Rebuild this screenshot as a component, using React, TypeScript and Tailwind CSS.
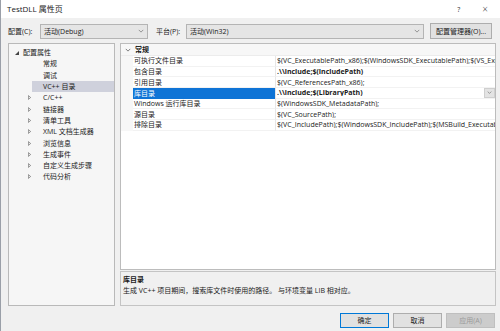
const treeItems = [
  { label: '常规', leaf: true },
  { label: '调试', leaf: true },
  { label: 'VC++ 目录', leaf: true, selected: true },
  { label: 'C/C++' },
  { label: '链接器' },
  { label: '清单工具' },
  { label: 'XML 文档生成器' },
  { label: '浏览信息' },
  { label: '生成事件' },
  { label: '自定义生成步骤' },
  { label: '代码分析' }
]

const props = [
  { name: '可执行文件目录', value: '$(VC_ExecutablePath_x86);$(WindowsSDK_ExecutablePath);$(VS_ExecutablePath);$(MSBuild_ExecutablePath)' },
  { name: '包含目录', value: '.\\\\include;$(IncludePath)', bold: true },
  { name: '引用目录', value: '$(VC_ReferencesPath_x86);' },
  { name: '库目录', value: '.\\\\include;$(LibraryPath)', bold: true, selected: true },
  { name: 'Windows 运行库目录', value: '$(WindowsSDK_MetadataPath);' },
  { name: '源目录', value: '$(VC_SourcePath);' },
  { name: '排除目录', value: '$(VC_IncludePath);$(WindowsSDK_IncludePath);$(MSBuild_ExecutablePath);$(VC_LibraryPath_x86);' }
]

function Chevron({ className }: { className?: string }) {
  return (
    <svg viewBox="0 0 8 5" className={className} fill="none" stroke="currentColor" strokeWidth="1">
      <polyline points="1,1 4,4 7,1" />
    </svg>
  )
}

function Dropdown({ label, width }: { label: string; width: string }) {
  return (
    <div className={`${width} shrink-0 h-[15px] flex items-center justify-between bg-[#e5e5e5] border border-[#b4b4b4] pl-[3px] pr-[3px]`}>
      <span>{label}</span>
      <Chevron className="w-[6px] h-[4px] text-[#7a7a7a]" />
    </div>
  )
}

function Tree() {
  return (
    <div className="w-[107px] shrink-0 border border-[#b9b9b9] bg-[#f6f6f6] pt-[3px] whitespace-nowrap">
      <div className="h-[11.3px] flex items-center pl-[6px] gap-[4px]">
        <svg viewBox="0 0 4 4" className="w-[4px] h-[4px] text-[#444]">
          <polygon points="4,0 4,4 0,4" fill="currentColor" />
        </svg>
        <span>配置属性</span>
      </div>
      {treeItems.map((item) => (
        <div
          key={item.label}
          className={`h-[11.3px] flex items-center ${item.selected ? 'bg-[#cfd1dc] ml-[23px] pl-[2px]' : 'pl-[19px]'}`}
        >
          {!item.leaf && (
            <svg viewBox="0 0 4 6" className="w-[3px] h-[5px] mr-[12px] text-[#555]">
              <polygon points="0.5,0.5 3.5,3 0.5,5.5" fill="none" stroke="currentColor" strokeWidth="0.8" />
            </svg>
          )}
          <span className={item.leaf && !item.selected ? 'pl-[15px]' : item.selected ? 'pl-[9px]' : ''}>{item.label}</span>
        </div>
      ))}
    </div>
  )
}

function Grid() {
  return (
    <div className="flex-1 border border-[#bcbcbc] bg-white overflow-hidden">
      <div className="h-[12px] flex items-center bg-[#f7f7f7] border-b border-[#ececec]">
        <Chevron className="w-[6px] h-[4px] ml-[4px] mr-[4px] text-[#555]" />
        <span className="font-bold">常规</span>
      </div>
      {props.map((p) => (
        <div key={p.name} className="h-[10.66px] flex items-center">
          <div className="w-[12px] shrink-0 h-full bg-[#f7f7f7]" />
          <div
            className={`w-[143px] shrink-0 h-full flex items-center pl-[1px] border-r border-[#e6e6e6] whitespace-nowrap ${p.selected ? 'bg-[#0f74d6] text-white' : 'border-b border-b-[#f2f2f2]'}`}
          >
            {p.name}
          </div>
          <div className="flex-1 h-full flex items-center pl-[1px] min-w-0 border-b border-[#f2f2f2]">
            <span className={`whitespace-nowrap overflow-hidden flex-1 min-w-0 ${p.bold ? 'font-bold' : ''}`}>{p.value}</span>
            {p.selected && (
              <div className="w-[11px] shrink-0 h-[10px] bg-[#e3e3e3] border border-[#cfcfcf] flex items-center justify-center">
                <Chevron className="w-[5px] h-[3px] text-[#666]" />
              </div>
            )}
          </div>
        </div>
      ))}
    </div>
  )
}

export default function App() {
  return (
    <div className="w-[500px] h-[331px] bg-[#f0f0f0] text-[7px] leading-none text-[#1a1a1a] font-['Segoe_UI','Open_Sans','Noto_Sans_CJK_SC',sans-serif] flex flex-col border-l border-[#9a9fa8] overflow-hidden">
      <div className="h-[18px] shrink-0 bg-white flex items-center justify-between pl-[6px] pr-[12px] text-[8px]">
        <span>TestDLL 属性页</span>
        <div className="flex items-center gap-[22px] text-[#333]">
          <span className="text-[7px]">?</span>
          <span className="text-[10px] font-light">×</span>
        </div>
      </div>

      <div className="flex items-center mt-[5px] pl-[7px] pr-[6px] whitespace-nowrap">
        <span className="w-[32px] shrink-0">配置(C):</span>
        <Dropdown label="活动(Debug)" width="w-[108px]" />
        <span className="ml-[8px] w-[30px] shrink-0">平台(P):</span>
        <Dropdown label="活动(Win32)" width="w-[238px]" />
        <div className="ml-[6px] w-[62px] shrink-0 h-[16px] bg-[#e1e1e1] border border-[#adadad] flex items-center justify-center">
          配置管理器(O)...
        </div>
      </div>

      <div className="flex flex-1 min-h-0 gap-[5px] mt-[4px] pl-[7px] pr-[4px]">
        <Tree />
        <div className="flex-1 min-w-0 flex flex-col gap-[1px]">
          <Grid />
          <div className="h-[35px] shrink-0 border border-[#c4c4c4] bg-[#f0f0f0] pl-[2px] pt-[4px] flex flex-col gap-[4px] whitespace-nowrap">
            <span className="font-bold">库目录</span>
            <span>生成 VC++ 项目期间，搜索库文件时使用的路径。 与环境变量 LIB 相对应。</span>
          </div>
        </div>
      </div>

      <div className="flex justify-end gap-[4px] pr-[5px] mt-[7px] mb-[3px]">
        <div className="w-[49px] h-[15px] bg-[#e1e1e1] border border-[#0078d7] flex items-center justify-center">确定</div>
        <div className="w-[49px] h-[15px] bg-[#e1e1e1] border border-[#adadad] flex items-center justify-center">取消</div>
        <div className="w-[49px] h-[15px] bg-[#cccccc] border border-[#bfbfbf] text-[#9a9a9a] flex items-center justify-center">应用(A)</div>
      </div>
    </div>
  )
}
